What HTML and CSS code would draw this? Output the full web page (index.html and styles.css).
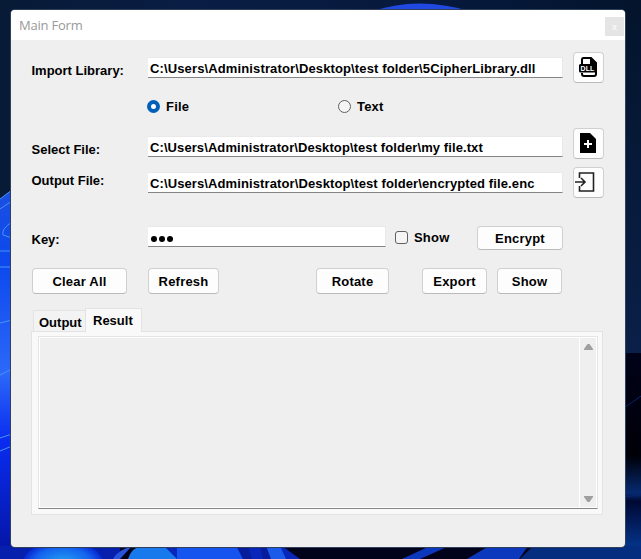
FILE: index.html
```html
<!DOCTYPE html>
<html lang="en">
<head>
<meta charset="utf-8">
<title>Main Form</title>
<link rel="stylesheet" href="styles.css">
</head>
<body>
<svg class="wallpaper" viewBox="0 0 641 559" width="641" height="559" aria-hidden="true">
  <defs>
    <linearGradient id="night" x1="0" x2="1"><stop offset="0" stop-color="#071a36"/><stop offset=".3" stop-color="#0a1d44"/><stop offset=".75" stop-color="#06183a"/><stop offset="1" stop-color="#03142c"/></linearGradient>
    <linearGradient id="left" x1="0" x2="0" y1="0" y2="1"><stop offset="0" stop-color="#1c50e0"/><stop offset=".2" stop-color="#0d48ee"/><stop offset=".5" stop-color="#2c68f8"/><stop offset=".68" stop-color="#0a2cf0"/><stop offset="1" stop-color="#0414a0"/></linearGradient>
    <linearGradient id="right" x1="0" x2="0" y1="0" y2="1"><stop offset="0" stop-color="#000218"/><stop offset=".5" stop-color="#000008"/><stop offset=".68" stop-color="#062a70"/><stop offset=".72" stop-color="#000833"/><stop offset="1" stop-color="#0440a0"/></linearGradient>
    <linearGradient id="side" x1="0" x2="0" y1="0" y2="1"><stop offset="0" stop-color="#03142c"/><stop offset="1" stop-color="#0a2048"/></linearGradient>
    <radialGradient id="petal"><stop offset="0" stop-color="#22a4f0"/><stop offset=".7" stop-color="#1463ee"/><stop offset="1" stop-color="#0728d0"/></radialGradient>
  </defs>
  <rect width="641" height="559" fill="url(#night)"/>
  <path d="M624 10H641V353H624Z" fill="url(#side)"/>
  <path d="M370 12Q418-5 473 12Z" fill="#1f49e0"/>
  <path d="M0 199L14 188V559H0Z" fill="url(#left)"/>
  <path d="M0 199L12 190M0 209L12 201M12 222Q1 229 3 235L12 238M0 251H12M0 267H12M0 323L12 320M0 375L12 369M0 438L12 434M0 451L12 446" fill="none" stroke="#4794f4"/>
  <path d="M624 353H641V559H624Z" fill="url(#right)"/>
  <path d="M624 408L641 396M624 497L641 495" fill="none" stroke="#0b246f"/>
  <path d="M0 546H641V559H0Z" fill="#01031a"/>
  <path d="M0 546H120V559H0Z" fill="#0620ad"/>
  <ellipse cx="63" cy="563" rx="40" ry="22" fill="url(#petal)"/>
  <path d="M113 559Q119 549 131 547L120 559Z" fill="#2854dc"/>
  <path d="M128 559L139 546H282L300 559Z" fill="#0827ba"/>
  <path d="M128 559Q132 547 142 546H164L177 559Z" fill="#1779ec"/>
  <path d="M177 559V546H236L243 559Z" fill="#1554ef"/>
  <path d="M243 559L237 546H248L252 559ZM263 559L260 546H267L271 559Z" fill="#061c9a"/>
  <path d="M271 559L266 546H280L286 559Z" fill="#1b5bea"/>
  <path d="M402 559L430 546H449L420 559ZM467 559L489 546H528L519 559Z" fill="#0b38bd"/>
  <path d="M520 559L533 546H641V559Z" fill="#042d80"/>
</svg>
<main class="window">
  <header class="titlebar"><span class="title">Main Form</span><button class="close">x</button></header>
  <form class="form">
    <div class="row library">
      <label class="label low">Import Library:</label>
      <div class="field path">C:\Users\Administrator\Desktop\test folder\5CipherLibrary.dll</div>
      <button type="button" class="btn icon" aria-label="Import library">
        <svg width="20" height="22" viewBox="0 0 20 22"><path d="M4 8V3.500Q4 2 5.500 2H13L18 7V18Q18 20 16 20H6Q4 20 4 18V17" fill="#fff" stroke="#000" stroke-width="2"/><path d="M12 1L19 8H12ZM2.500 8H19V16.500H2.500Q1 16.500 1 15V9.500Q1 8 2.500 8Z"/><text class="dll" x="2.500" y="15" textLength="14" lengthAdjust="spacingAndGlyphs">DLL</text></svg>
      </button>
    </div>
    <div class="row modes">
      <label class="choice"><span class="radio on"></span><span class="caption">File</span></label>
      <label class="choice"><span class="radio"></span><span class="caption">Text</span></label>
    </div>
    <div class="row select">
      <label class="label low">Select File:</label>
      <div class="field path">C:\Users\Administrator\Desktop\test folder\my file.txt</div>
      <button type="button" class="btn icon" aria-label="Select file">
        <svg width="20" height="22" viewBox="0 0 20 22"><path d="M2 1H12L18 7V21H2Z"/><path d="M10 8V16M6 12H14" stroke="#fff" stroke-width="2"/></svg>
      </button>
    </div>
    <div class="row output">
      <label class="label">Output File:</label>
      <div class="field path">C:\Users\Administrator\Desktop\test folder\encrypted file.enc</div>
      <button type="button" class="btn icon" aria-label="Output file">
        <svg class="enter" width="20" height="22" viewBox="0 0 20 22"><path d="M4.500 7V2H18.500V20H4.500V15M0 11H10M6 7L10 11L6 15" fill="none" stroke="#222" stroke-width="1.600"/></svg>
      </button>
    </div>
    <div class="row key">
      <label class="label low">Key:</label>
      <div class="field secret"><i></i><i></i><i></i></div>
      <label class="choice"><span class="check"></span><span class="caption">Show</span></label>
      <button type="button" class="btn encrypt">Encrypt</button>
    </div>
    <div class="row actions">
      <button type="button" class="btn clear">Clear All</button>
      <button type="button" class="btn refresh">Refresh</button>
      <button type="button" class="btn rotate">Rotate</button>
      <button type="button" class="btn export">Export</button>
      <button type="button" class="btn show">Show</button>
    </div>
    <div class="tabs"><div class="tab">Output</div><div class="tab active">Result</div></div>
    <section class="panel">
      <div class="result">
        <div class="content"></div>
        <div class="scroll">
          <svg width="9" height="6" viewBox="0 0 9 6"><path d="M3.500 0H5.500L9 5V6H0V5Z" fill="#9f9f9f"/></svg>
          <svg width="9" height="6" viewBox="0 0 9 6"><path d="M0 0H9V1L5.500 6H3.500L0 1Z" fill="#9f9f9f"/></svg>
        </div>
      </div>
    </section>
  </form>
</main>
</body>
</html>
```
FILE: styles.css
```css
* { box-sizing: border-box; }
html, body { margin: 0; width: 641px; height: 559px; overflow: hidden; }
body { padding: 10px 16px 12px 11px; background: #06183a; font: bold 13px/16px "Liberation Sans", Arial, sans-serif; color: #000; }
.wallpaper { position: absolute; left: 0; top: 0; z-index: -1; }
.window { width: 614px; height: 537px; background: #efefef; border-radius: 4px; overflow: hidden; box-shadow: 0 0 0 1px #30405a; }
.titlebar { height: 30px; padding-left: 8px; background: #fff; display: flex; justify-content: space-between; }
.title { font: 13px/31px "Open Sans", sans-serif; letter-spacing: -.22px; color: #999; }
.close { width: 19px; height: 19px; margin: 7px 1px 0 0; padding: 0; border: 0; background: #e5e5e5; color: #f8f8f8; font: bold 9px/18px "Liberation Sans", sans-serif; }
.form { padding: 12px 21px 0 21px; }
.row { display: flex; align-items: flex-start; }
.label { width: 117px; margin-left: -1px; padding: 6px 0 0 .5px; white-space: nowrap; }
.low { padding-top: 11px; }
.library { height: 46px; }
.library .field { margin-top: 5px; }
.modes { height: 30px; padding-left: 115px; }
.modes .choice { width: 191px; }
.caption { padding-top: 2px; }
.select { height: 39px; }
.select .low { padding-top: 14px; }
.select .field { margin-top: 8px; letter-spacing: .09px; }
.output { height: 59px; }
.output .field { margin-top: 5px; letter-spacing: .11px; }
.field { height: 21px; padding: 3px 0 0 2px; background: #fff; border: solid #e9e9e9; border-width: 1px 1px 1px 0; border-bottom-color: #858585; white-space: pre; }
.path { flex: none; width: 415px; margin-right: 10px; letter-spacing: .13px; }
.secret { width: 238px; display: flex; gap: 2px; padding: 8.5px 0 0 3px; }
.secret i { width: 6px; height: 6px; border-radius: 50%; background: #000; }
.btn { height: 26px; padding: 2px 0 0; border: 1px solid #d0d0d0; border-bottom-color: #bababa; border-radius: 4px; background: #fdfdfd; color: #000; font: inherit; letter-spacing: .2px; }
.icon { width: 31px; height: 31px; padding: 0 2px 1px 0; display: flex; align-items: center; justify-content: center; flex: none; }
.dll { font: bold 8px "Liberation Sans", sans-serif; fill: #fff; }
.enter { margin-right: 5px; }
.choice { display: flex; gap: 6px; align-items: center; height: 16px; letter-spacing: .2px; }
.radio { width: 13px; height: 13px; border: 1px solid #606060; border-radius: 50%; background: #f5f5f5; }
.radio.on { border: 4px solid #005fb8; background: #fff; }
.check { width: 13px; height: 13px; border: 1px solid #606060; border-radius: 3px; background: #f5f5f5; }
.library, .select, .output { width: 572px; }
.key { height: 42px; }
.key .low { padding-top: 6px; }
.key .choice { width: 82px; margin: 3px 0 0 9px; }
.encrypt { height: 24px; width: 86px; }
.actions { height: 41px; }
.clear { width: 95px; margin-right: 21px; }
.refresh { width: 71px; margin-right: 97px; }
.rotate { width: 73px; margin-right: 33px; }
.export { width: 65px; margin-right: 10px; }
.show { width: 65px; }
.tabs { height: 22px; display: flex; align-items: flex-end; padding-left: 1px; }
.tab { width: 52px; height: 21px; border: 1px solid #e3e3e3; border-width: 1px 0 0 1px; background: #f3f3f3; padding: 4px 0 0 5px; }
.tab.active { width: 57px; height: 24px; margin-bottom: -1px; border-right-width: 1px; background: #f9f9f9; padding: 4px 0 0 7px; z-index: 1; position: relative; }
.panel { width: 572px; height: 184px; margin-left: -1px; padding: 4px 4px 5px 6px; border: 1px solid #e3e3e3; background: #f9f9f9; }
.result { height: 173px; display: flex; border: 1px solid #e5e5e5; border-bottom-color: #858585; background: #efefef; box-shadow: inset 0 0 0 1px #fff; }
.content { flex: 1; }
.scroll { width: 18px; border-left: 1px solid #fff; padding: 7px 0 6px 4px; display: flex; flex-direction: column; justify-content: space-between; }
```
